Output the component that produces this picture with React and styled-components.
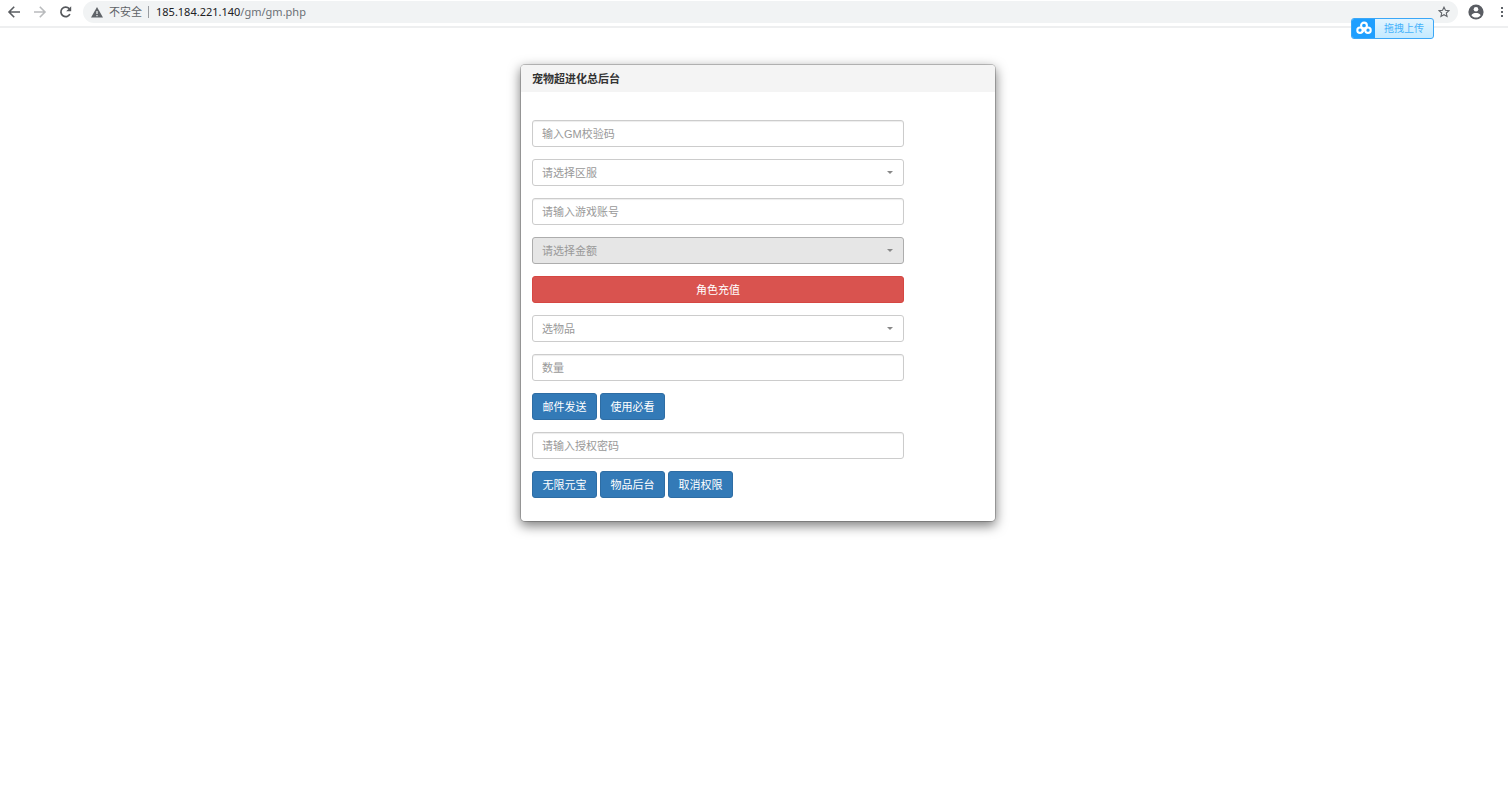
import styled, { createGlobalStyle } from 'styled-components'


export default function App() {
  return (
    <>
      <GlobalStyle />
      <BrowserBar>
        <NavGroup>
          <IconButton type='button' aria-label='后退'>
            <svg width='14' height='14' viewBox='0 0 14 14' fill='none' stroke='#5a5d61' strokeWidth='1.6'>
              <path d='M13 7H2.2M7.2 1.8L2 7l5.2 5.2' />
            </svg>
          </IconButton>
          <IconButton type='button' aria-label='前进'>
            <svg width='14' height='14' viewBox='0 0 14 14' fill='none' stroke='#b9bbbd' strokeWidth='1.6'>
              <path d='M1 7h10.8M6.8 1.8L12 7l-5.2 5.2' />
            </svg>
          </IconButton>
          <IconButton type='button' aria-label='重新加载'>
            <svg width='14' height='14' viewBox='0 0 14 14'>
              <path d='M10.900 9.200A4.800 4.800 0 1 1 10.200 3.600' fill='none' stroke='#55585c' strokeWidth='1.7' />
              <path d='M12.200 1.200v5H7.200z' fill='#55585c' />
            </svg>
          </IconButton>
        </NavGroup>

        <AddressBar>
          <svg width='12' height='11' viewBox='0 0 12 11'>
            <path d='M6 0l6 10.5H0z' fill='#5f6368' />
            <path d='M5.4 4h1.2v3H5.400zM5.400 8h1.2v1.2H5.400z' fill='#f1f3f4' />
          </svg>
          <Insecure>不安全</Insecure>
          <Divider />
          <Url><b>185.184.221.140</b>/gm/gm.php</Url>
          <IconButton type='button' aria-label='收藏'>
            <svg width='12' height='12' viewBox='0 0 12 12' fill='none' stroke='#5f6368' strokeWidth='1.1'>
              <path d='M6 1.2l1.450 3.150 3.450.35-2.600 2.300.75 3.400L6 8.650 2.950 10.400l.75-3.400L1.100 4.700l3.450-.35z' />
            </svg>
          </IconButton>
        </AddressBar>

        <MenuGroup>
          <IconButton type='button' aria-label='个人资料'>
            <svg width='16' height='16' viewBox='0 0 16 16'>
              <circle cx='8' cy='8' r='7.6' fill='#5a5d63' />
              <circle cx='8' cy='5.2' r='2.3' fill='#fff' />
              <path d='M3.400 11.200C4 9.600 6.200 9 8 9s4 .6 4.600 2.200C11.600 12.800 9.900 13.600 8 13.600s-3.600-.8-4.600-2.400z' fill='#fff' />
            </svg>
          </IconButton>
          <IconButton type='button' aria-label='菜单'>
            <svg width='4' height='12' viewBox='0 0 4 12' fill='#5f6368'>
              <rect x='1' y='1' width='2' height='2' />
              <rect x='1' y='5' width='2' height='2' />
              <rect x='1' y='9' width='2' height='2' />
            </svg>
          </IconButton>
        </MenuGroup>

        <UploadButton type='button'>
          <UploadIcon>
            <svg width='16' height='14' viewBox='0 0 16 14' fill='none' stroke='#fff' strokeWidth='2.1'>
              <circle cx='8' cy='4.500' r='2.900' />
              <circle cx='4' cy='9.200' r='2.700' />
              <circle cx='12' cy='9.200' r='2.700' />
              <path d='M5.900 11L10 7.300' />
            </svg>
          </UploadIcon>
          <UploadText>拖拽上传</UploadText>
        </UploadButton>
      </BrowserBar>

      <Main>
        <Panel>
          <PanelHeading>宠物超进化总后台</PanelHeading>
          <Form onSubmit={e => e.preventDefault()}>
            <Input type='text' aria-label='GM校验码' placeholder='输入GM校验码' />
            <Dropdown label='请选择区服' />
            <Input type='text' aria-label='游戏账号' placeholder='请输入游戏账号' />
            <Dropdown label='请选择金额' $active />
            <Button type='button' $danger>角色充值</Button>
            <Dropdown label='选物品' />
            <Input type='text' aria-label='数量' placeholder='数量' />
            <ButtonRow>
              <Button type='button'>邮件发送</Button>
              <Button type='button'>使用必看</Button>
            </ButtonRow>
            <Input type='password' aria-label='授权密码' placeholder='请输入授权密码' />
            <ButtonRow>
              <Button type='button'>无限元宝</Button>
              <Button type='button'>物品后台</Button>
              <Button type='button'>取消权限</Button>
            </ButtonRow>
          </Form>
        </Panel>
      </Main>
    </>
  )
}

function Dropdown({ label, $active }) {
  return (
    <SelectWrap>
      <Select aria-label={label} defaultValue='' $active={$active}>
        <option value=''>{label}</option>
      </Select>
      <Caret />
    </SelectWrap>
  )
}

const GlobalStyle = createGlobalStyle`
  * {
    box-sizing: border-box;
  }

  body {
    margin: 0;
    background: #fff;
    color: #333;
    font-family: "Liberation Sans", "Noto Sans CJK SC", sans-serif;
    font-size: 11px;
    line-height: 16px;
  }

  button, input, select {
    font: inherit;
  }
`

const BrowserBar = styled.header`
  position: relative;
  display: flex;
  align-items: center;
  gap: 10px;
  padding: 1px 4px 3px 7px;
  border-bottom: 2px solid #eeeff0;
`

const NavGroup = styled.nav`
  display: flex;
  align-items: center;
  gap: 12px;
`

const MenuGroup = styled.div`
  display: flex;
  align-items: center;
  gap: 16px;
`

const IconButton = styled.button`
  display: flex;
  padding: 0;
  border: 0;
  background: none;
`

const AddressBar = styled.div`
  flex: 1;
  display: flex;
  align-items: center;
  height: 22px;
  padding: 0 8px;
  border-radius: 11px;
  background: #f1f3f4;
  color: #5f6368;
`

const Insecure = styled.span`
  margin-left: 6px;
`

const Divider = styled.span`
  width: 1px;
  height: 12px;
  margin: 0 7px 0 6px;
  background: #9a9da1;
`

const Url = styled.span`
  flex: 1;
  font-family: "Noto Sans", sans-serif;
  color: #6b6f74;

  b {
    font-weight: 400;
    color: #202124;
  }
`

const UploadButton = styled.button`
  position: absolute;
  top: 18px;
  right: 74px;
  display: flex;
  height: 21px;
  padding: 0;
  border: 1px solid #3ba7f7;
  border-radius: 3px;
  overflow: hidden;
  background: linear-gradient(#e2f4ff, #c4eaff);
  color: #45b2fb;
  font-size: 10px;
`

const UploadIcon = styled.span`
  display: flex;
  align-items: center;
  justify-content: center;
  width: 23px;
  height: 100%;
  padding-bottom: 1px;
  background: #1e9fff;
`

const UploadText = styled.span`
  padding: 2px 9px 1px;
`

const Main = styled.main`
  display: flex;
  justify-content: center;
  padding: 36px 0 36px 8px;
`

const Panel = styled.section`
  width: 476px;
  max-width: 100%;
  border: 1px solid rgba(0, 0, 0, .2);
  border-radius: 5px;
  background: #fff;
  background-clip: padding-box;
  box-shadow: 0 4px 12px rgba(0, 0, 0, .5);
`

const PanelHeading = styled.h1`
  margin: 0;
  padding: 6px 11px 5px;
  border-radius: 4px 4px 0 0;
  background: #f4f4f4;
  font-size: 11px;
  font-weight: 700;
`

const Form = styled.form`
  display: flex;
  flex-direction: column;
  gap: 12px;
  width: 100%;
  max-width: 394px;
  padding: 28px 11px 23px;
`

const Input = styled.input`
  width: 100%;
  height: 27px;
  padding: 0 9px;
  border: 1px solid #ccc;
  border-radius: 3px;
  background: #fff;
  box-shadow: inset 0 1px 1px rgba(0, 0, 0, .075);
  color: #555;

  &::placeholder {
    color: #999;
    opacity: 1;
  }
`

const SelectWrap = styled.div`
  position: relative;
`

const Select = styled.select`
  display: block;
  appearance: none;
  width: 100%;
  height: 27px;
  padding: 0 9px;
  border: 1px solid ${props => props.$active ? '#adadad' : '#ccc'};
  border-radius: 3px;
  background: ${props => props.$active ? '#e6e6e6' : '#fff'};
  color: #999;
`

const Caret = styled.span`
  position: absolute;
  top: 12px;
  right: 11px;
  border-top: 3px solid #888;
  border-left: 3px solid transparent;
  border-right: 3px solid transparent;
  pointer-events: none;
`

const Button = styled.button`
  min-width: 65px;
  height: 27px;
  padding: 0 9px;
  border: 1px solid ${props => props.$danger ? '#d64742' : '#2e6da4'};
  border-radius: 3px;
  background: ${props => props.$danger ? '#d9534f' : '#337ab7'};
  color: #fff;
`

const ButtonRow = styled.div`
  display: flex;
  gap: 3px;
`
